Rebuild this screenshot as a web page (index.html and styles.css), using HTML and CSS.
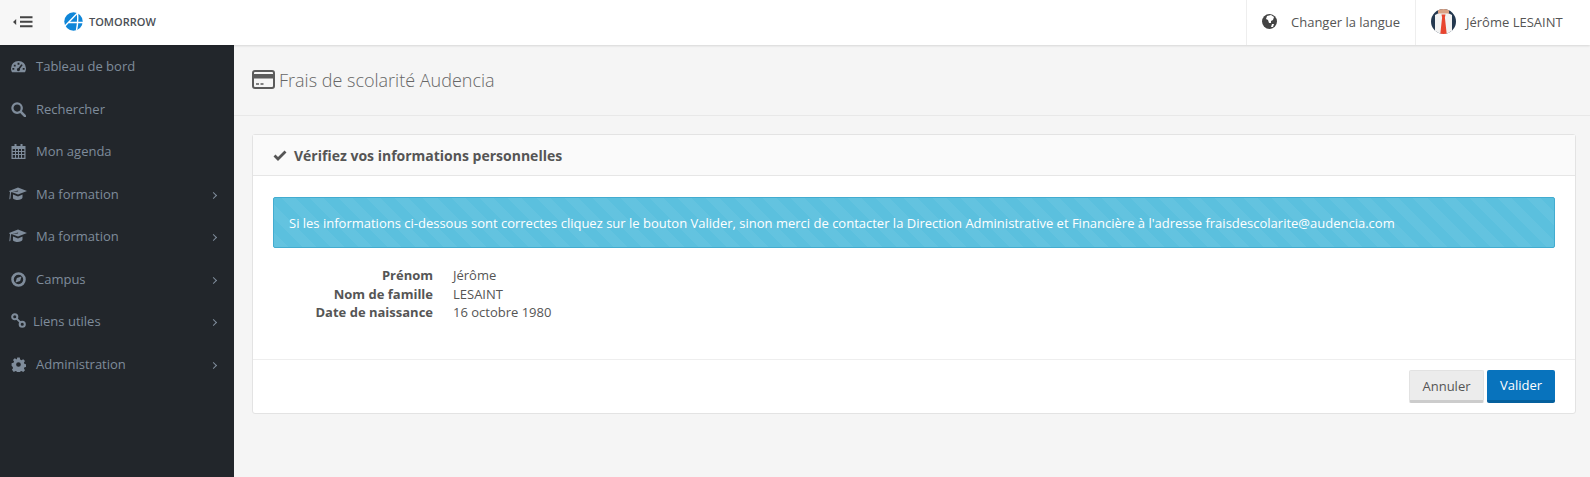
FILE: index.html
```html
<!DOCTYPE html>
<html lang="fr">
<head>
<meta charset="utf-8">
<title>Frais de scolarité Audencia</title>
<link rel="stylesheet" href="styles.css">
</head>
<body>
<header class="topbar">
  <button class="toggle" aria-label="Menu">
    <svg width="20" height="12" viewBox="0 0 20 12"><path d="M0 6l3.200-3v6z" fill="#444"/><path d="M7 1.200h12.500M7 5.700h12.500M7 10.200h12.500" stroke="#444" stroke-width="2"/></svg>
  </button>
  <div class="brand">
    <svg class="logo" width="19" height="19" viewBox="0 0 19 19"><circle cx="9.500" cy="9.500" r="9.200" fill="#0f86d8"/><path d="M.5 14.500L14 .5M5 10.500h14M13.500 .5c.5 6 .3 12-1 18" stroke="#fff" stroke-width="1.400" fill="none"/></svg>
    <span>TOMORROW</span>
  </div>
  <div class="topright">
    <div class="topitem lang">
      <svg width="15" height="15" viewBox="0 0 15 15"><circle cx="7.500" cy="7.500" r="7.500" fill="#444"/><path d="M5 2l4-1 3 2-1 3-2 1 0 2-2 0-1-3-2-1zM10 10l2 0-1 3-2 0z" fill="#fff"/></svg>
      <span>Changer la langue</span>
    </div>
    <div class="topitem user">
      <svg class="avatar" width="25" height="25" viewBox="0 0 25 25"><defs><clipPath id="av"><circle cx="12.500" cy="12.500" r="12.500"/></clipPath></defs><g clip-path="url(#av)"><rect width="25" height="25" fill="#24384f"/><path d="M4 25V6l4-2h9l4 2v19z" fill="#f2f2f2"/><rect x="7" y="0" width="11" height="4.500" fill="#d9a184"/><path d="M10.500 5.500h4l-.6 3 1.800 16.500h-6.400l1.800-16.500z" fill="#e8452f"/></g></svg>
      <span>Jérôme LESAINT</span>
    </div>
  </div>
</header>
<div class="layout">
  <nav class="sidebar">
    <a class="navitem"><svg class="navicon" viewBox="0 0 16 14"><path fill-rule="evenodd" d="M8 1a8 8 0 0 0-8 8c0 1.500.4 3 1.200 4h13.600c.8-1 1.200-2.500 1.200-4a8 8 0 0 0-8-8zM7 3h2v2H7zM3 5h2v2H3zM11 4.500l1.500 1-3 4a1.700 1.700 0 1 1-1.500-1zM1.500 8.500h2v2h-2zM12.500 8.500h2v2h-2z"/></svg><span>Tableau de bord</span></a>
    <a class="navitem"><svg class="navicon" viewBox="0 0 16 16"><circle cx="6.500" cy="6.500" r="5" fill="none" stroke="currentColor" stroke-width="2.400"/><path d="M10.500 10.500L15 15" stroke="currentColor" stroke-width="2.800" stroke-linecap="round"/></svg><span>Rechercher</span></a>
    <a class="navitem"><svg class="navicon" viewBox="0 0 14 15"><path fill-rule="evenodd" d="M3 0h2v2h4V0h2v2h3v13H0V2h3zM1.200 5v2h2.300V5zm3.300 0v2h2V5zm3 0v2h2V5zm3 0v2h2.300V5zM1.200 8v2h2.300V8zm3.300 0v2h2V8zm3 0v2h2V8zm3 0v2h2.300V8zM1.200 11v2.800h2.300V11zm3.300 0v2.800h2V11zm3 0v2.800h2V11zm3 0v2.800h2.300V11z"/></svg><span>Mon agenda</span></a>
    <a class="navitem sub"><svg class="navicon wide" viewBox="0 0 18 14"><path d="M9 0l9 3.500-9 3.500-6.500-2.500L9 4 9.200 3 2 4.700 1.500 11l-1.200 1 .7-7.300L0 3.500zM4 7l5 2 4.500-2v3c0 1.500-2.500 2.500-5 2.500S3.500 11.500 4 10z"/></svg><span>Ma formation</span><i class="chev"></i></a>
    <a class="navitem sub"><svg class="navicon wide" viewBox="0 0 18 14"><path d="M9 0l9 3.500-9 3.500-6.500-2.500L9 4 9.200 3 2 4.700 1.500 11l-1.200 1 .7-7.300L0 3.500zM4 7l5 2 4.500-2v3c0 1.500-2.500 2.500-5 2.500S3.500 11.500 4 10z"/></svg><span>Ma formation</span><i class="chev"></i></a>
    <a class="navitem sub"><svg class="navicon" viewBox="0 0 14 14"><circle cx="7" cy="7" r="5.600" fill="none" stroke="currentColor" stroke-width="2.400"/><path d="M9.800 4.200L8.500 8.500 4.200 9.800 5.500 5.500z"/></svg><span>Campus</span><i class="chev"></i></a>
    <a class="navitem sub links"><svg class="navicon" viewBox="0 0 14 14"><g fill="none" stroke="currentColor" stroke-width="1.900"><circle cx="3.500" cy="3.500" r="2.400"/><circle cx="10.500" cy="10.500" r="2.400"/><path d="M5 5l4 4"/></g></svg><span>Liens utiles</span><i class="chev"></i></a>
    <a class="navitem sub"><svg class="navicon" viewBox="0 0 14 14"><path fill-rule="evenodd" d="M5.700 0h2.600l.4 2 1.300.6 1.800-1 1.800 1.800-1.100 1.700.6 1.300 1.900.4v2.600l-1.900.4-.6 1.300 1.100 1.700-1.800 1.800-1.800-1-1.300.6-.4 2H5.700l-.4-2-1.300-.6-1.800 1L.4 12.300l1.100-1.700-.6-1.300L0 8.300V5.700l1.900-.4.600-1.300L1.400 2.400l1.800-1.800 1.800 1L5.300 2zM7 4.600a2.400 2.400 0 1 0 0 4.800 2.400 2.400 0 0 0 0-4.800z" transform="scale(.92) translate(.6 .6)"/></svg><span>Administration</span><i class="chev"></i></a>
  </nav>
  <main class="content">
    <div class="pagehead">
      <svg class="cardicon" width="23" height="19" viewBox="0 0 23 19"><rect x="1" y="1" width="21" height="17" rx="2" fill="#f5f5f5" stroke="#5b5b5b" stroke-width="2"/><rect x="1" y="4" width="21" height="4.500" fill="#5b5b5b"/><path d="M4 14h3M8.500 14h3" stroke="#5b5b5b" stroke-width="1.500"/></svg>
      <h1>Frais de scolarité Audencia</h1>
    </div>
    <section class="panel">
      <div class="panelhead">
        <svg width="14" height="11" viewBox="0 0 14 11"><path d="M1.500 5.500L5 9l7.500-7.500" fill="none" stroke="#555" stroke-width="2.800"/></svg>
        <h2>Vérifiez vos informations personnelles</h2>
      </div>
      <div class="panelbody">
        <div class="alert">Si les informations ci-dessous sont correctes cliquez sur le bouton Valider, sinon merci de contacter la Direction Administrative et Financière à l'adresse fraisdescolarite@audencia.com</div>
        <dl class="info">
          <dt>Prénom</dt><dd>Jérôme</dd>
          <dt>Nom de famille</dt><dd>LESAINT</dd>
          <dt>Date de naissance</dt><dd>16 octobre 1980</dd>
        </dl>
      </div>
      <div class="panelfoot">
        <button class="btn cancel">Annuler</button>
        <button class="btn ok">Valider</button>
      </div>
    </section>
  </main>
</div>
</body>
</html>
```
FILE: styles.css
```css
* { box-sizing: border-box; }
html, body { margin: 0; height: 100%; overflow: hidden; }
body {
  font-family: "Open Sans", "Liberation Sans", sans-serif;
  font-size: 13px;
  color: #555;
  background: #f5f5f5;
  display: flex;
  flex-direction: column;
}
.topbar {
  height: 45px;
  flex: none;
  display: flex;
  align-items: center;
  background: #fff;
  box-shadow: 0 1px 2px rgba(0,0,0,.12);
  position: relative;
  z-index: 2;
}
.toggle {
  width: 50px;
  height: 45px;
  border: 0;
  padding: 0 0 2px 13px;
  background: #f7f7f7;
  display: flex;
  align-items: center;
  justify-content: flex-start;
}
.brand {
  display: flex;
  align-items: center;
  gap: 6px;
  margin-left: 14px;
  padding-bottom: 2px;
  font-size: 11px;
  font-weight: 600;
  color: #4a4f55;
}
.topright { margin-left: auto; display: flex; height: 45px; }
.topitem {
  display: flex;
  align-items: center;
  height: 45px;
  padding-bottom: 2px;
  border-left: 1px solid #eee;
}
.lang { width: 169px; padding-left: 15px; gap: 14px; }
.user { width: 175px; padding-left: 15px; gap: 10px; }
.layout { flex: 1; display: flex; min-height: 0; }
.sidebar {
  width: 234px;
  flex: none;
  padding-top: .4px;
  background: #22262b;
  display: flex;
  flex-direction: column;
}
.navitem {
  height: 42.500px;
  flex: none;
  display: flex;
  align-items: center;
  padding-left: 11px;
  color: #7f8c9b;
  position: relative;
}
.navitem span { margin-left: 10px; padding-bottom: 1px; }
.navicon { width: 15px; height: 15px; fill: currentColor; flex: none; }
.navicon.wide { width: 18px; margin-left: -2px; margin-right: -1px; }
.links span { margin-left: 7px; }
.links .navicon { margin-top: -2px; }
.chev {
  position: absolute;
  left: 211px;
  top: 20px;
  width: 5px;
  height: 5px;
  border-top: 1px solid #7f8c9b;
  border-right: 1px solid #7f8c9b;
  transform: rotate(45deg);
}
.content { flex: 1; min-width: 0; }
.pagehead {
  height: 71px;
  border-bottom: 1px solid #e8e8e8;
  display: flex;
  align-items: center;
  padding: 0 0 1px 18px;
  gap: 4px;
}
.pagehead h1 { margin: 0; padding-top: 1px; font-size: 18px; font-weight: 300; color: #666; }
.panel {
  margin: 18px 14px 0 18px;
  height: 280px;
  background: #fff;
  border: 1px solid #e3e3e3;
  border-radius: 3px;
  display: flex;
  flex-direction: column;
}
.panelhead {
  height: 41px;
  flex: none;
  background: #fafafa;
  border-bottom: 1px solid #e6e6e6;
  display: flex;
  align-items: center;
  padding-left: 20px;
  gap: 7px;
}
.panelhead h2 { margin: 0; font-size: 14px; font-weight: 700; color: #555; }
.panelbody { flex: 1; padding: 21px 20px 0; }
.alert {
  height: 51px;
  display: flex;
  align-items: center;
  padding-left: 15px;
  color: #fff;
  border: 1px solid #43acd0;
  border-radius: 2px;
  background: #5bc0de repeating-linear-gradient(45deg, rgba(255,255,255,.05) 0 10px, transparent 10px 20px);
}
.info {
  margin: 18px 0 0;
  display: grid;
  grid-template-columns: 160px 1fr;
  column-gap: 20px;
  line-height: 18.500px;
}
.info dt { font-weight: 700; text-align: right; }
.info dd { margin: 0; }
.panelfoot {
  height: 54px;
  flex: none;
  border-top: 1px solid #eee;
  display: flex;
  justify-content: flex-end;
  align-items: flex-start;
  padding: 10px 20px 0 0;
  gap: 3px;
}
.btn {
  height: 33px;
  border: 0;
  border-radius: 2px;
  font: 13px "Open Sans", "Liberation Sans", sans-serif;
}
.cancel { width: 75px; background: #ececec; color: #555; border: 1px solid #e2e2e2; border-bottom: 3px solid #ccc; }
.ok { width: 68px; background: #0873bd; color: #fff; border-bottom: 3px solid #05609d; }
```
